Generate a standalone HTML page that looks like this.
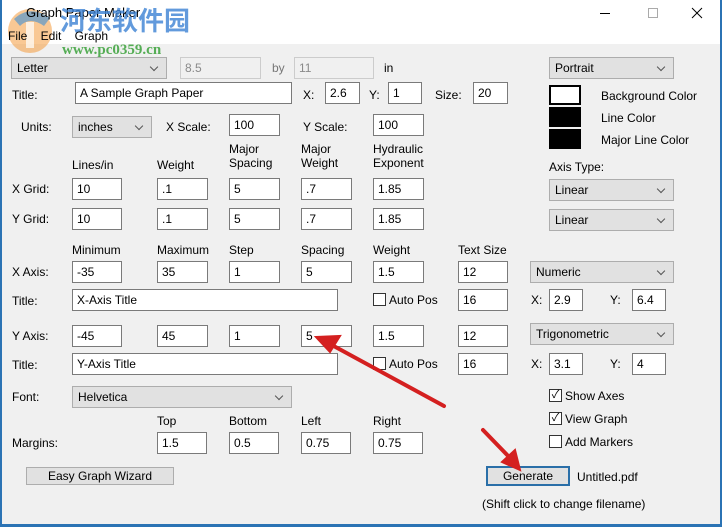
<!DOCTYPE html>
<html><head><meta charset="utf-8"><style>
*{margin:0;padding:0;box-sizing:border-box}
body{width:722px;height:527px;overflow:hidden;background:#f0f0f0;font-family:"Liberation Sans","Noto Sans CJK SC",sans-serif;font-size:12px;color:#000;position:relative}
.tb{position:absolute;left:0;top:0;width:722px;height:44px;background:#fff}
.l{position:absolute;white-space:nowrap;line-height:14px}
.i{position:absolute;height:22px;background:#fff;border:1px solid #7a7a7a;padding:3px 0 0 4px;line-height:14px;white-space:nowrap}
.d{background:#f0f0f0;border-color:#ccc;color:#8a8a8a}
.s{position:absolute;height:22px;background:#e1e1e1;border:1px solid #adadad;padding:3px 0 0 5px;line-height:14px}
.s:after{content:"";position:absolute;right:9px;top:6px;width:5px;height:5px;border-right:1px solid #555;border-bottom:1px solid #555;transform:rotate(45deg)}
.sw{position:absolute;left:549px;width:32px;height:20px;background:#000}
.cb{position:absolute;width:13px;height:13px;border:1px solid #333;background:#fff}
.b{position:absolute;background:#e1e1e1;border:1px solid #adadad;text-align:center;line-height:16px}
</style></head><body>
<div class="tb"></div>
<div style="position:absolute;left:0;top:0;width:2px;height:527px;background:#2b73b4"></div>
<div style="position:absolute;left:0;top:524px;width:722px;height:3px;background:#2b73b4"></div>
<div style="position:absolute;left:720px;top:0;width:2px;height:527px;background:#2b73b4"></div>
<svg style="position:absolute;left:4px;top:4px" width="60" height="54"><circle cx="26" cy="27" r="22" fill="#f49b3c" opacity=".55"/><path d="M10 15 Q26 0 46 14 L40 22 Q26 12 16 22Z" fill="#3d8fd6" opacity=".6"/><rect x="22" y="18" width="8" height="26" fill="#fff" opacity=".7"/></svg>
<div class="l" style="left:26px;top:6px;font-size:13px">Graph Paper Maker</div>
<div class="l" style="left:60px;top:6px;font-size:26px;line-height:30px;font-weight:bold;color:#3b82d4;opacity:.8">河东软件园</div>
<div class="l" style="left:62px;top:43px;font-size:15px;font-weight:bold;color:#3aa23a;font-family:'Liberation Serif',serif;opacity:.85">www.pc0359.cn</div>
<div class="l" style="left:8px;top:29px;font-size:12px">File&nbsp;&nbsp;&nbsp; Edit&nbsp;&nbsp;&nbsp; Graph</div>
<svg style="position:absolute;left:590px;top:0" width="130" height="30" stroke="#000" fill="none" stroke-width="1">
<line x1="10" y1="13.5" x2="20" y2="13.5"/>
<rect x="58.5" y="8.5" width="9" height="9" stroke="#aaa"/>
<line x1="102" y1="8" x2="112" y2="18"/><line x1="112" y1="8" x2="102" y2="18"/>
</svg>

<div class="s" style="left:11px;top:57px;width:156px">Letter</div>
<div class="i d" style="left:180px;top:57px;width:81px">8.5</div>
<div class="l" style="left:272px;top:61px;color:#777">by</div>
<div class="i d" style="left:294px;top:57px;width:80px">11</div>
<div class="l" style="left:384px;top:61px">in</div>

<div class="l" style="left:12px;top:88px">Title:</div>
<div class="i" style="left:75px;top:82px;width:217px">A Sample Graph Paper</div>
<div class="l" style="left:303px;top:88px">X:</div>
<div class="i" style="left:325px;top:82px;width:35px">2.6</div>
<div class="l" style="left:369px;top:88px">Y:</div>
<div class="i" style="left:388px;top:82px;width:34px">1</div>
<div class="l" style="left:435px;top:88px">Size:</div>
<div class="i" style="left:473px;top:82px;width:35px">20</div>

<div class="l" style="left:21px;top:120px">Units:</div>
<div class="s" style="left:72px;top:116px;width:80px">inches</div>
<div class="l" style="left:166px;top:120px">X Scale:</div>
<div class="i" style="left:229px;top:114px;width:51px">100</div>
<div class="l" style="left:303px;top:120px">Y Scale:</div>
<div class="i" style="left:373px;top:114px;width:51px">100</div>

<div class="l" style="left:72px;top:158px">Lines/in</div>
<div class="l" style="left:157px;top:158px">Weight</div>
<div class="l" style="left:229px;top:142px">Major<br>Spacing</div>
<div class="l" style="left:301px;top:142px">Major<br>Weight</div>
<div class="l" style="left:373px;top:142px">Hydraulic<br>Exponent</div>

<div class="l" style="left:12px;top:182px">X Grid:</div>
<div class="i" style="left:72px;top:178px;width:50px">10</div>
<div class="i" style="left:157px;top:178px;width:51px">.1</div>
<div class="i" style="left:229px;top:178px;width:51px">5</div>
<div class="i" style="left:301px;top:178px;width:51px">.7</div>
<div class="i" style="left:373px;top:178px;width:51px">1.85</div>
<div class="l" style="left:12px;top:212px">Y Grid:</div>
<div class="i" style="left:72px;top:208px;width:50px">10</div>
<div class="i" style="left:157px;top:208px;width:51px">.1</div>
<div class="i" style="left:229px;top:208px;width:51px">5</div>
<div class="i" style="left:301px;top:208px;width:51px">.7</div>
<div class="i" style="left:373px;top:208px;width:51px">1.85</div>

<div class="l" style="left:72px;top:243px">Minimum</div>
<div class="l" style="left:157px;top:243px">Maximum</div>
<div class="l" style="left:229px;top:243px">Step</div>
<div class="l" style="left:301px;top:243px">Spacing</div>
<div class="l" style="left:373px;top:243px">Weight</div>
<div class="l" style="left:458px;top:243px">Text Size</div>

<div class="l" style="left:12px;top:265px">X Axis:</div>
<div class="i" style="left:72px;top:261px;width:50px">-35</div>
<div class="i" style="left:157px;top:261px;width:51px">35</div>
<div class="i" style="left:229px;top:261px;width:51px">1</div>
<div class="i" style="left:301px;top:261px;width:51px">5</div>
<div class="i" style="left:373px;top:261px;width:51px">1.5</div>
<div class="i" style="left:458px;top:261px;width:50px">12</div>
<div class="s" style="left:530px;top:261px;width:144px">Numeric</div>

<div class="l" style="left:12px;top:294px">Title:</div>
<div class="i" style="left:72px;top:289px;width:266px">X-Axis Title</div>
<div class="cb" style="left:373px;top:293px"></div>
<div class="l" style="left:389px;top:293px">Auto Pos</div>
<div class="i" style="left:458px;top:289px;width:50px">16</div>
<div class="l" style="left:531px;top:293px">X:</div>
<div class="i" style="left:549px;top:289px;width:34px">2.9</div>
<div class="l" style="left:610px;top:293px">Y:</div>
<div class="i" style="left:632px;top:289px;width:34px">6.4</div>

<div class="l" style="left:12px;top:329px">Y Axis:</div>
<div class="i" style="left:72px;top:325px;width:50px">-45</div>
<div class="i" style="left:157px;top:325px;width:51px">45</div>
<div class="i" style="left:229px;top:325px;width:51px">1</div>
<div class="i" style="left:301px;top:325px;width:51px">5</div>
<div class="i" style="left:373px;top:325px;width:51px">1.5</div>
<div class="i" style="left:458px;top:325px;width:50px">12</div>
<div class="s" style="left:530px;top:323px;width:144px">Trigonometric</div>

<div class="l" style="left:12px;top:358px">Title:</div>
<div class="i" style="left:72px;top:353px;width:266px">Y-Axis Title</div>
<div class="cb" style="left:373px;top:357px"></div>
<div class="l" style="left:389px;top:357px">Auto Pos</div>
<div class="i" style="left:458px;top:353px;width:50px">16</div>
<div class="l" style="left:531px;top:357px">X:</div>
<div class="i" style="left:549px;top:353px;width:34px">3.1</div>
<div class="l" style="left:610px;top:357px">Y:</div>
<div class="i" style="left:632px;top:353px;width:34px">4</div>

<div class="l" style="left:12px;top:390px">Font:</div>
<div class="s" style="left:72px;top:386px;width:220px">Helvetica</div>

<div class="l" style="left:157px;top:414px">Top</div>
<div class="l" style="left:229px;top:414px">Bottom</div>
<div class="l" style="left:301px;top:414px">Left</div>
<div class="l" style="left:373px;top:414px">Right</div>
<div class="l" style="left:12px;top:436px">Margins:</div>
<div class="i" style="left:157px;top:432px;width:50px">1.5</div>
<div class="i" style="left:229px;top:432px;width:50px">0.5</div>
<div class="i" style="left:301px;top:432px;width:50px">0.75</div>
<div class="i" style="left:373px;top:432px;width:50px">0.75</div>

<div class="b" style="left:26px;top:467px;width:148px;height:18px">Easy Graph Wizard</div>

<div class="s" style="left:549px;top:57px;width:125px">Portrait</div>
<div class="sw" style="top:85px;background:#fff;border:2px solid #000"></div>
<div class="sw" style="top:107px"></div>
<div class="sw" style="top:129px"></div>
<div class="l" style="left:601px;top:89px">Background Color</div>
<div class="l" style="left:601px;top:111px">Line Color</div>
<div class="l" style="left:601px;top:133px">Major Line Color</div>
<div class="l" style="left:549px;top:160px">Axis Type:</div>
<div class="s" style="left:549px;top:179px;width:125px">Linear</div>
<div class="s" style="left:549px;top:209px;width:125px">Linear</div>

<div class="cb" style="left:549px;top:389px;font-size:11px;line-height:11px;text-align:center">✓</div>
<div class="l" style="left:565px;top:389px">Show Axes</div>
<div class="cb" style="left:549px;top:412px;font-size:11px;line-height:11px;text-align:center">✓</div>
<div class="l" style="left:565px;top:412px">View Graph</div>
<div class="cb" style="left:549px;top:435px"></div>
<div class="l" style="left:565px;top:435px">Add Markers</div>

<div class="b" style="left:486px;top:466px;width:84px;height:20px;border:2px solid #2a6fa8;line-height:16px">Generate</div>
<div class="l" style="left:577px;top:470px">Untitled.pdf</div>
<div class="l" style="left:482px;top:497px">(Shift click to change filename)</div>

<svg style="position:absolute;left:0;top:0" width="722" height="527">
<g stroke="#d42020" stroke-width="4" fill="#d42020" stroke-linecap="round">
<line x1="444" y1="406" x2="330" y2="344"/>
<polygon points="316,337 340,336 330,352" stroke-width="2"/>
<line x1="483" y1="430" x2="512" y2="460"/>
<polygon points="520,470 502,462 515,450" stroke-width="2"/>
</g></svg>
</body></html>
